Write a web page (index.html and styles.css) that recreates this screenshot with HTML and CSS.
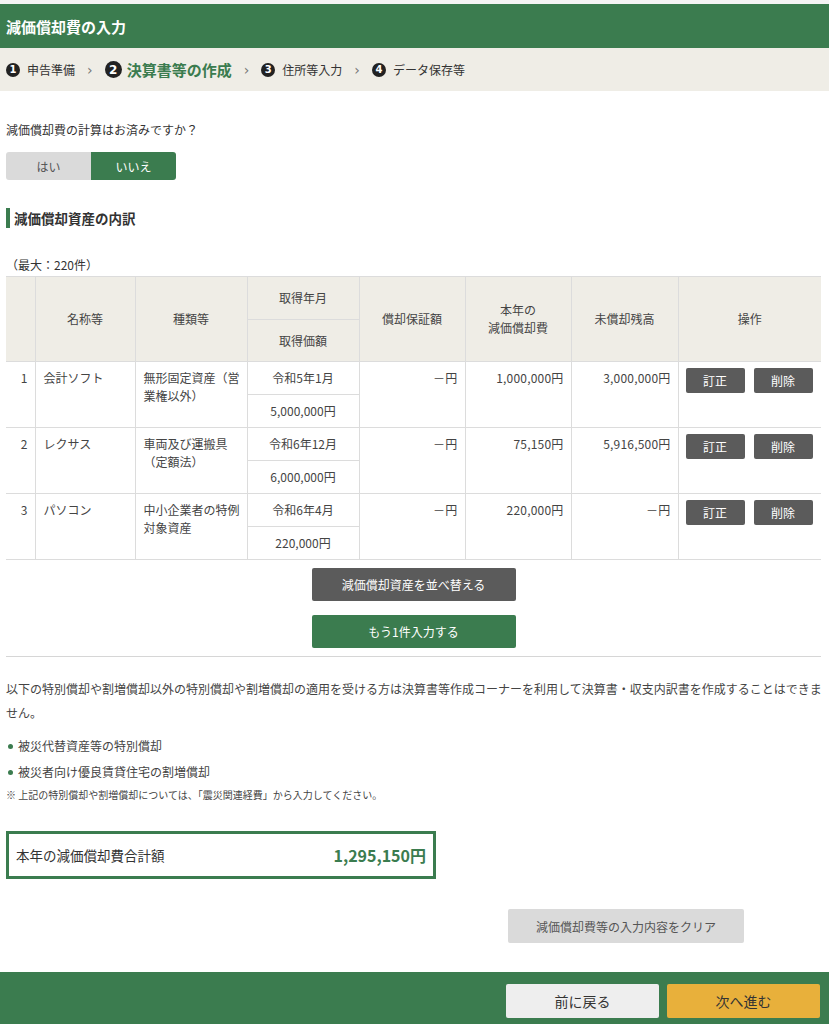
FILE: index.html
```html
<!DOCTYPE html>
<html lang="ja">
<head>
<meta charset="utf-8">
<title>減価償却費の入力</title>
<link rel="stylesheet" href="styles.css">
</head>
<body>
<div class="topline"></div>
<header class="header"><h1>減価償却費の入力</h1></header>
<nav class="steps">
  <span class="step"><span class="circ">1</span>申告準備</span>
  <span class="chev">›</span>
  <span class="step current"><span class="circ big">2</span>決算書等の作成</span>
  <span class="chev">›</span>
  <span class="step"><span class="circ">3</span>住所等入力</span>
  <span class="chev">›</span>
  <span class="step"><span class="circ">4</span>データ保存等</span>
</nav>

<main class="main">
  <p class="question">減価償却費の計算はお済みですか？</p>
  <div class="toggle">
    <span class="tg tg-off">はい</span>
    <span class="tg tg-on">いいえ</span>
  </div>

  <h2 class="section-title">減価償却資産の内訳</h2>
  <p class="max">（最大：220件）</p>

  <table class="assets">
    <thead>
      <tr>
        <th rowspan="2" class="c-no"></th>
        <th rowspan="2" class="c-name">名称等</th>
        <th rowspan="2" class="c-kind">種類等</th>
        <th class="c-acq">取得年月</th>
        <th rowspan="2" class="c-amt">償却保証額</th>
        <th rowspan="2" class="c-amt">本年の<br>減価償却費</th>
        <th rowspan="2" class="c-amt2">未償却残高</th>
        <th rowspan="2" class="c-op">操作</th>
      </tr>
      <tr><th class="c-acq">取得価額</th></tr>
    </thead>
    <tbody>
      <tr>
        <td rowspan="2" class="no">1</td>
        <td rowspan="2" class="txt">会計ソフト</td>
        <td rowspan="2" class="txt">無形固定資産（営業権以外）</td>
        <td class="ctr">令和5年1月</td>
        <td rowspan="2" class="amt">－円</td>
        <td rowspan="2" class="amt">1,000,000円</td>
        <td rowspan="2" class="amt">3,000,000円</td>
        <td rowspan="2" class="ops"><span class="btn-dark">訂正</span><span class="btn-dark">削除</span></td>
      </tr>
      <tr><td class="ctr">5,000,000円</td></tr>
      <tr>
        <td rowspan="2" class="no">2</td>
        <td rowspan="2" class="txt">レクサス</td>
        <td rowspan="2" class="txt">車両及び運搬具<br>（定額法）</td>
        <td class="ctr">令和6年12月</td>
        <td rowspan="2" class="amt">－円</td>
        <td rowspan="2" class="amt">75,150円</td>
        <td rowspan="2" class="amt">5,916,500円</td>
        <td rowspan="2" class="ops"><span class="btn-dark">訂正</span><span class="btn-dark">削除</span></td>
      </tr>
      <tr><td class="ctr">6,000,000円</td></tr>
      <tr>
        <td rowspan="2" class="no">3</td>
        <td rowspan="2" class="txt">パソコン</td>
        <td rowspan="2" class="txt">中小企業者の特例対象資産</td>
        <td class="ctr">令和6年4月</td>
        <td rowspan="2" class="amt">－円</td>
        <td rowspan="2" class="amt">220,000円</td>
        <td rowspan="2" class="amt">－円</td>
        <td rowspan="2" class="ops"><span class="btn-dark">訂正</span><span class="btn-dark">削除</span></td>
      </tr>
      <tr><td class="ctr">220,000円</td></tr>
    </tbody>
  </table>

  <div class="table-actions">
    <span class="btn-wide btn-sort">減価償却資産を並べ替える</span>
    <span class="btn-wide btn-add">もう1件入力する</span>
  </div>

  <div class="notice">
    <p class="notice-text">以下の特別償却や割増償却以外の特別償却や割増償却の適用を受ける方は決算書等作成コーナーを利用して決算書・収支内訳書を作成することはできません。</p>
    <ul class="bullets">
      <li>被災代替資産等の特別償却</li>
      <li>被災者向け優良賃貸住宅の割増償却</li>
    </ul>
    <p class="note">※ 上記の特別償却や割増償却については、「震災関連経費」から入力してください。</p>
  </div>

  <div class="total">
    <span class="total-label">本年の減価償却費合計額</span>
    <span class="total-value">1,295,150円</span>
  </div>

  <div class="clear-row">
    <span class="btn-clear">減価償却費等の入力内容をクリア</span>
  </div>
</main>

<footer class="footer">
  <span class="btn-foot btn-back">前に戻る</span>
  <span class="btn-foot btn-next">次へ進む</span>
</footer>
</body>
</html>
```

FILE: styles.css
```css
* { box-sizing: border-box; }
html, body { margin: 0; padding: 0; }
body {
  font-family: "Noto Sans CJK JP", "Noto Sans", sans-serif;
  font-size: 12px;
  color: #333;
  background: #fff;
  width: 829px;
}
.topline { height: 4px; background: #f4f4f4; }
.header {
  background: #3b7c4f;
  height: 44px;
  display: flex;
  align-items: center;
  padding-left: 6px;
}
.header h1 {
  margin: 0;
  color: #fff;
  font-size: 15px;
  font-weight: bold;
}
.steps {
  background: #efede6;
  height: 43px;
  display: flex;
  align-items: center;
  padding-left: 6px;
  font-size: 12px;
  color: #333;
}
.step { display: flex; align-items: center; }
.circ {
  display: inline-flex;
  align-items: center;
  justify-content: center;
  width: 14px;
  height: 14px;
  border-radius: 50%;
  background: #222;
  color: #fff;
  font-size: 10px;
  font-weight: bold;
  margin-right: 7px;
  font-family: "DejaVu Sans", sans-serif;
}
.circ.big { width: 17px; height: 17px; font-size: 12px; margin-right: 5px; }
.step.current { color: #3b7c4f; font-size: 15px; font-weight: bold; }
.chev {
  color: #777;
  font-size: 14px;
  margin: 0 12px 0 12px;
  font-family: "DejaVu Sans", sans-serif;
}
.main { padding: 0 8px 0 6px; }
.question { margin: 30px 0 0; line-height: 18px; }
.toggle { display: flex; margin-top: 13px; }
.tg {
  width: 85px;
  height: 28px;
  display: flex;
  align-items: center;
  justify-content: center;
  font-size: 12px;
}
.tg-off { background: #dadada; color: #555; border-radius: 3px 0 0 3px; }
.tg-on { background: #3b7c4f; color: #fff; border-radius: 0 3px 3px 0; }
.section-title {
  margin: 28px 0 0;
  border-left: 4px solid #3b7c4f;
  padding-left: 4px;
  height: 20px;
  line-height: 20px;
  font-size: 13.5px;
  font-weight: bold;
  color: #333;
}
.max { margin: 28px 0 0; line-height: 18px; }
.assets {
  margin-top: 2px;
  width: 815px;
  border-collapse: collapse;
  table-layout: fixed;
  font-size: 12px;
}
.assets th {
  background: #efede6;
  font-weight: normal;
  color: #444;
  border: 1px solid #dcdcdc;
  line-height: 18px;
  padding: 0;
}
.assets thead tr:first-child th { height: 43px; }
.assets thead tr:nth-child(2) th { height: 42px; }
.assets th:first-child, .assets td.no { border-left: none; }
.assets th.c-op, .assets td.ops { border-right: none; }
.c-no { width: 29px; }
.c-name { width: 100px; }
.c-kind { width: 112px; }
.c-acq { width: 112px; }
.c-amt { width: 106px; }
.c-amt2 { width: 107px; }
.c-op { width: 143px; }
.assets td {
  border: 1px solid #dcdcdc;
  vertical-align: top;
  line-height: 18px;
  padding: 7px 7px 0 8px;
  color: #444;
  height: 33px;
}
.assets td.no { text-align: right; padding-right: 7px; padding-left: 0; }
.assets td.ctr { text-align: center; padding: 7px 0 0; }
.assets td.amt { text-align: right; padding-right: 7px; padding-left: 0; white-space: nowrap; letter-spacing: 0.2px; }
.assets td.ops { padding: 6px 0 0 7px; white-space: nowrap; }
.btn-dark {
  display: inline-flex;
  align-items: center;
  justify-content: center;
  width: 59px;
  height: 25px;
  background: #5b5b5b;
  color: #fff;
  border-radius: 2px;
  margin-right: 9px;
  font-size: 12px;
}
.table-actions {
  display: flex;
  flex-direction: column;
  align-items: center;
  gap: 14px;
  padding: 8px 0 8px;
  border-bottom: 1px solid #d6d6d6;
}
.btn-wide {
  display: flex;
  align-items: center;
  justify-content: center;
  width: 204px;
  height: 33px;
  color: #fff;
  border-radius: 2px;
  font-size: 12px;
}
.btn-sort { background: #5b5b5b; }
.btn-add { background: #3b7c4f; }
.notice { padding-top: 20px; }
.notice-text { margin: 0 -6px 0 0; line-height: 24px; color: #444; }
.bullets { list-style: none; margin: 8px 0 0; padding: 0; }
.bullets li {
  position: relative;
  padding-left: 12px;
  line-height: 26px;
  color: #444;
}
.bullets li::before {
  content: "";
  position: absolute;
  left: 2px;
  top: 11px;
  width: 5px;
  height: 5px;
  border-radius: 50%;
  background: #3b7c4f;
}
.note { margin: 0; font-size: 10px; line-height: 20px; color: #444; }
.total {
  margin-top: 26px;
  width: 430px;
  height: 48px;
  border: 3px solid #3b7c4f;
  display: flex;
  align-items: center;
  justify-content: space-between;
  padding: 0 7px;
}
.total-label { font-size: 13.5px; color: #333; }
.total-value { font-size: 16px; font-weight: bold; color: #3b7c4f; }
.clear-row {
  display: flex;
  justify-content: flex-end;
  padding: 30px 77px 29px 0;
}
.btn-clear {
  display: flex;
  align-items: center;
  justify-content: center;
  width: 236px;
  height: 34px;
  background: #dadada;
  color: #555;
  border-radius: 2px;
  font-size: 12px;
}
.footer {
  background: #3b7c4f;
  height: 60px;
  display: flex;
  justify-content: flex-end;
  align-items: flex-start;
  padding: 12px 9px 0 0;
  gap: 8px;
}
.btn-foot {
  display: flex;
  align-items: center;
  justify-content: center;
  width: 153px;
  height: 34px;
  border-radius: 2px;
  font-size: 14px;
  color: #333;
}
.btn-back { background: #eeeeee; }
.btn-next { background: #e8b03b; }
```
